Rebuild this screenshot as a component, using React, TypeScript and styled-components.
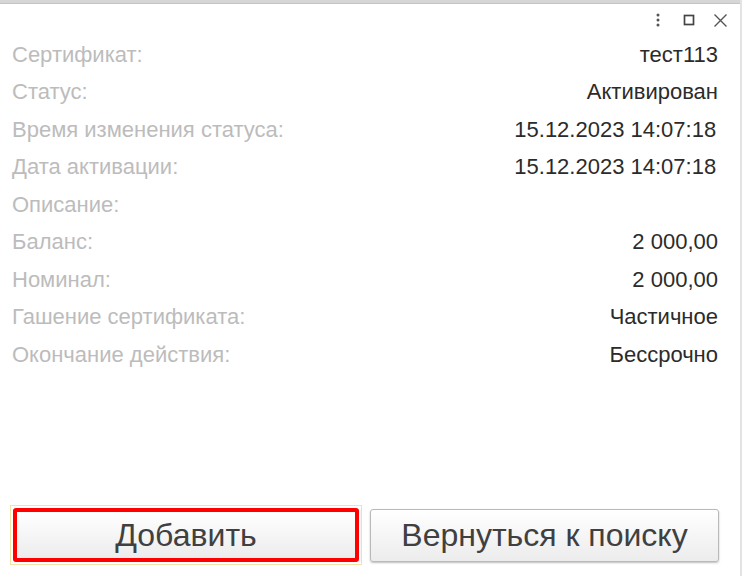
import styled, { createGlobalStyle } from "styled-components";

const GlobalStyle = createGlobalStyle`
  html, body {
    margin: 0;
    padding: 0;
    background: #ffffff;
  }

  body {
    font-family: "Liberation Sans", Arial, sans-serif;
  }
`;

// строки карточки сертификата
const fields = [
  { label: "Сертификат:", value: "тест113" },
  { label: "Статус:", value: "Активирован" },
  { label: "Время изменения статуса:", value: "15.12.2023 14:07:18\u200a" },
  { label: "Дата активации:", value: "15.12.2023 14:07:18\u200a" },
  { label: "Описание:", value: "" },
  { label: "Баланс:", value: "2 000,00" },
  { label: "Номинал:", value: "2 000,00" },
  { label: "Гашение сертификата:", value: "Частичное" },
  { label: "Окончание действия:", value: "Бессрочно" },
];

export default function App() {
  return (
    <>
      <GlobalStyle />
      <SWindow>
        <SBackStrip />

        <STitleBar>
          <SIconButton title="Ещё">
            <svg width="6" height="14" viewBox="0 0 6 14">
              <circle cx="3" cy="2" r="1.5" fill="#555" />
              <circle cx="3" cy="7" r="1.5" fill="#555" />
              <circle cx="3" cy="12" r="1.5" fill="#555" />
            </svg>
          </SIconButton>
          <SIconButton title="Развернуть">
            <svg width="12" height="12" viewBox="0 0 12 12">
              <rect x="1.5" y="1.5" width="9" height="9" fill="none" stroke="#444" strokeWidth="1.7" />
            </svg>
          </SIconButton>
          <SIconButton title="Закрыть">
            <svg width="15" height="15" viewBox="0 0 15 15">
              <path d="M1.5 1.5 L13.5 13.5 M13.5 1.5 L1.5 13.5" stroke="#555" strokeWidth="1.4" />
            </svg>
          </SIconButton>
        </STitleBar>

        <SFields>
          {fields.map((f) => (
            <SRow key={f.label}>
              <SLabel>{f.label}</SLabel>
              <SValue>{f.value}</SValue>
            </SRow>
          ))}
        </SFields>

        <SFooter>
          <SFocusFrame>
            <SButton $focused>Добавить</SButton>
          </SFocusFrame>
          <SButton>Вернуться к поиску</SButton>
        </SFooter>
      </SWindow>
    </>
  );
}

const SWindow = styled.div`
  width: 742px;
  height: 576px;
  box-sizing: border-box;
  border-right: 2px solid #e3e3e3;
  display: flex;
  flex-direction: column;
  overflow: hidden;
`;

const SBackStrip = styled.div`
  height: 3px;
  background: #d6d6d6;
  border-bottom: 1px solid #c4c4c4;
`;

const STitleBar = styled.div`
  height: 32px;
  display: flex;
  flex-direction: row;
  justify-content: flex-end;
  align-items: center;
  gap: 13px;
  padding-right: 11px;
`;

const SIconButton = styled.div`
  width: 18px;
  height: 18px;
  display: flex;
  align-items: center;
  justify-content: center;
`;

const SFields = styled.div`
  display: flex;
  flex-direction: column;
  padding-left: 12px;
  padding-right: 22px;
`;

const SRow = styled.div`
  height: 37.5px;
  display: flex;
  flex-direction: row;
  align-items: center;
  justify-content: space-between;
  font-size: 22px;
`;

const SLabel = styled.div`
  color: #bcbcbc;
`;

const SValue = styled.div`
  color: #2b2b2b;
  text-align: right;
  white-space: pre;
`;

const SFooter = styled.div`
  margin-top: auto;
  display: grid;
  grid-template-columns: 352px 1fr;
  gap: 8px;
  align-items: center;
  padding: 0 21px 11px 10px;
`;

const SFocusFrame = styled.div`
  border: 1px solid #efe3a6;
  padding: 2px;
  height: 60px;
  box-sizing: border-box;
  display: flex;
`;

const SButton = styled.div<{ $focused?: boolean }>`
  flex: 1;
  height: ${(p) => (p.$focused ? "54px" : "53px")};
  box-sizing: border-box;
  display: flex;
  align-items: center;
  justify-content: center;
  font-size: 32px;
  color: #404040;
  border-radius: 3px;
  background: linear-gradient(#ffffff, #ececec);
  border: ${(p) => (p.$focused ? "4px solid #ff0000" : "1px solid #b9b9b9")};
  box-shadow: ${(p) => (p.$focused ? "none" : "0 1px 2px rgba(0, 0, 0, 0.25)")};
`;
